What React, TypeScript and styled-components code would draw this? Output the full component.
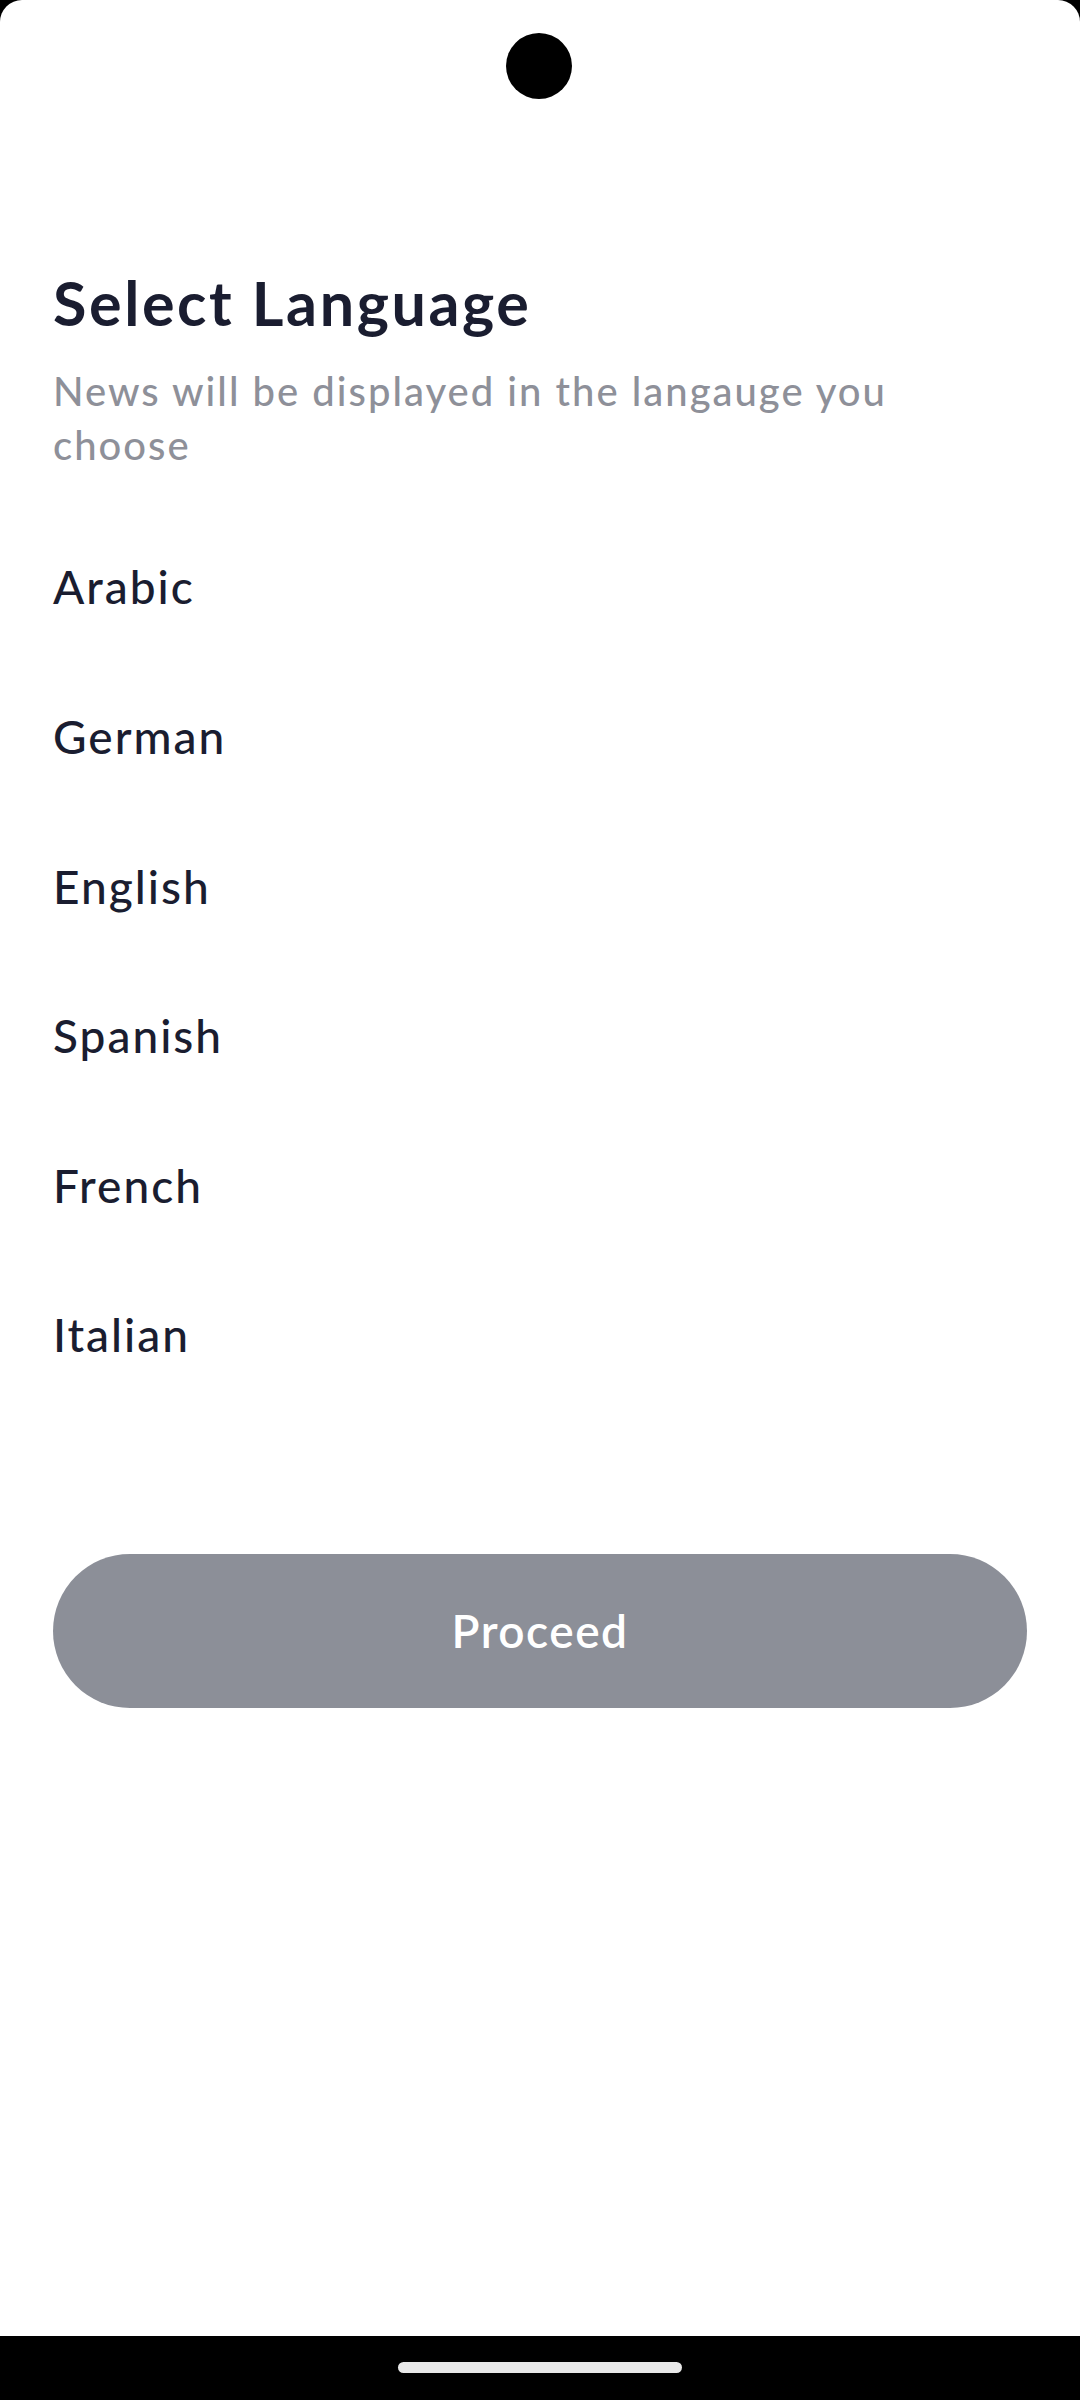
import React, { useState } from "react";
import styled, { createGlobalStyle } from "styled-components";

const GlobalStyle = createGlobalStyle`
  * { box-sizing: border-box; }
  body {
    margin: 0;
    background: #000;
  }
`;

const Device = styled.div`
  width: 1080px;
  height: 2400px;
  background: #000;
  display: flex;
  flex-direction: column;
  position: relative;
  overflow: hidden;
`;

const Screen = styled.main`
  flex: 1;
  background: #fff;
  border-radius: 22px 22px 0 0;
  padding: 266px 53px 0;
  display: flex;
  flex-direction: column;
  font-family: Lato, "Noto Sans", sans-serif;
`;

const Camera = styled.div`
  position: absolute;
  top: 33px;
  left: 506px;
  width: 66px;
  height: 66px;
  border-radius: 50%;
  background: #000;
`;

const Title = styled.h1`
  margin: 0;
  font-size: 61px;
  line-height: 1.2;
  font-weight: 700;
  color: #1a1d30;
  letter-spacing: 2.6px;
`;

const Subtitle = styled.p`
  margin: 25px 0 0;
  font-size: 40px;
  line-height: 54px;
  font-weight: 500;
  color: #8e9099;
  letter-spacing: 2px;
  width: 900px;
`;

const LanguageList = styled.ul`
  list-style: none;
  margin: 40px 0 0;
  padding: 0;
  display: flex;
  flex-direction: column;
`;

const LanguageItem = styled.li<{ $active: boolean }>`
  height: 149.6px;
  display: flex;
  align-items: center;
  font-size: 46px;
  font-weight: 500;
  letter-spacing: 2px;
  color: ${(p) => (p.$active ? "#3b5bdb" : "#1a1d30")};
  cursor: pointer;
`;

const ProceedButton = styled.button<{ $enabled: boolean }>`
  margin-top: 144px;
  height: 154px;
  width: 100%;
  border: none;
  border-radius: 77px;
  background: ${(p) => (p.$enabled ? "#1a1d30" : "#8c8f98")};
  color: #fff;
  font-family: inherit;
  font-size: 46px;
  font-weight: 600;
  letter-spacing: 1.5px;
  cursor: pointer;
`;

const NavBar = styled.div`
  height: 64px;
  background: #000;
  display: flex;
  justify-content: center;
  padding-top: 26px;
`;

const HomeIndicator = styled.div`
  width: 284px;
  height: 11px;
  border-radius: 6px;
  background: #e8e8e8;
`;

const languages = ["Arabic", "German", "English", "Spanish", "French", "Italian"];

const App = () => {
  const [selected, setSelected] = useState<string | null>(null);

  return (
    <>
      <GlobalStyle />
      <Device>
        <Screen>
          <Title>Select Language</Title>
          <Subtitle>News will be displayed in the langauge you choose</Subtitle>
          <LanguageList>
            {languages.map((lang) => (
              <LanguageItem
                key={lang}
                $active={selected === lang}
                onClick={() => setSelected(lang)}
              >
                {lang}
              </LanguageItem>
            ))}
          </LanguageList>
          <ProceedButton $enabled={selected !== null}>Proceed</ProceedButton>
        </Screen>
        <Camera />
        <NavBar>
          <HomeIndicator />
        </NavBar>
      </Device>
    </>
  );
};

export default App;
